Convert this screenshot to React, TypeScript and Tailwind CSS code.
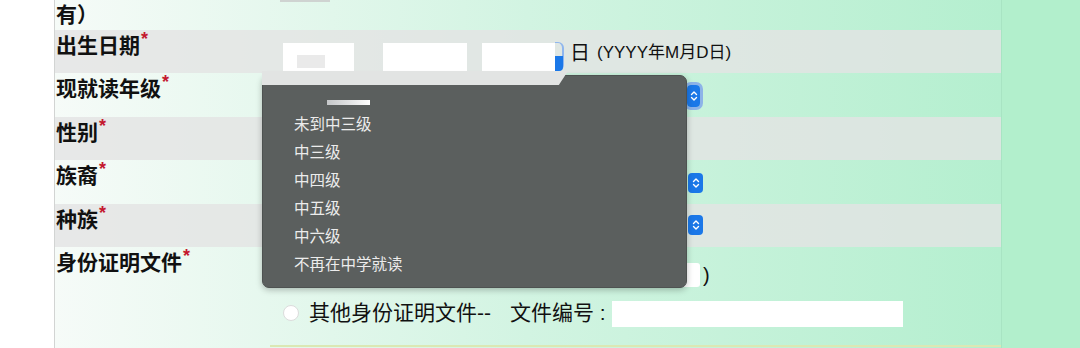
import React from "react";

const FONT = "font-['Liberation_Sans','Noto_Sans_CJK_SC',sans-serif]";

function Star() {
  return <span className="text-[#c4182f] text-[18px] font-bold relative -top-[8px] leading-none ml-[1px]">*</span>;
}

function Label({ text, star = true }: { text: string; star?: boolean }) {
  return (
    <div className="w-[228px] shrink-0 pl-[1px] pt-[2px] text-[21px] leading-[28px] font-bold text-[#111]">
      {text}
      {star && <Star />}
    </div>
  );
}

function BlueArrow({ w = 15, h = 20 }: { w?: number; h?: number }) {
  return (
    <div
      className="bg-[#1b78e8] rounded-[4px] flex items-center justify-center"
      style={{ width: w, height: h }}
    >
      <svg width="8" height="12" viewBox="0 0 8 12" fill="none">
        <path d="M1.5 4.5 L4 2 L6.5 4.5" stroke="white" strokeWidth="1.4" strokeLinecap="round" strokeLinejoin="round" />
        <path d="M1.5 7.5 L4 10 L6.5 7.5" stroke="white" strokeWidth="1.4" strokeLinecap="round" strokeLinejoin="round" />
      </svg>
    </div>
  );
}

export default function App() {
  const items = ["未到中三级", "中三级", "中四级", "中五级", "中六级", "不再在中学就读"];
  return (
    <div className={`w-[1080px] h-[348px] relative overflow-hidden bg-[#b2efcc] flex ${FONT}`}>
      <div className="w-[54px] shrink-0 bg-white" />
      <div className="w-[948px] shrink-0 h-full border-l border-[#d2d4d3] border-r border-r-[#a8e4c3] bg-linear-to-r from-[#f6fbf8] via-[#d2f4e2] to-[#b4efcf] flex flex-col relative">
        {/* top row */}
        <div className="h-[30px] flex relative">
          <div className="w-[228px] shrink-0 pl-[1px] pt-[1px] text-[21px] leading-[28px] font-bold text-[#111]">有）</div>
          <div className="absolute left-[225px] top-0 w-[50px] h-[2px] bg-[#cfd3d1]" />
        </div>
        {/* 出生日期 */}
        <div className="h-[43px] flex bg-[rgba(228,228,228,0.8)]">
          <Label text="出生日期" />
          <div className="flex items-start pt-[13px]">
            <div className="w-[71px] h-[28px] bg-white relative">
              <div className="absolute left-[14px] top-[12px] w-[28px] h-[13px] bg-[#eaeaea]" />
            </div>
            <div className="w-[29px]" />
            <div className="w-[84px] h-[28px] bg-white" />
            <div className="w-[15px]" />
            <div className="w-[73px] h-[28px] bg-white" />
            <div className="w-[9px] h-[29px] -mt-[1px] relative">
              <div className="absolute inset-0 rounded-r-[6px] border-r-[2px] border-t-[1px] border-[#8fb6ee]" />
              <div className="absolute left-0 bottom-0 w-[8px] h-[15px] bg-[#1b78e8] rounded-br-[4px]" />
            </div>
            <div className="ml-[6px] -mt-[4px] text-[20px] leading-[28px] text-[#111]">日</div>
            <div className="ml-[7px] -mt-[2px] text-[17px] leading-[24px] text-[#111]">(YYYY年M月D日)</div>
          </div>
        </div>
        {/* 现就读年级 */}
        <div className="h-[44px] flex">
          <Label text="现就读年级" />
          <div className="flex items-start pt-[9px] pl-[401px]">
            <div className="rounded-[7px] border-[3px] border-[#8db3e8] p-0">
              <BlueArrow w={13} h={22} />
            </div>
          </div>
        </div>
        {/* 性别 */}
        <div className="h-[43px] flex bg-[rgba(228,228,228,0.8)]">
          <Label text="性别" />
        </div>
        {/* 族裔 */}
        <div className="h-[44px] flex">
          <Label text="族裔" />
          <div className="pt-[13px] pl-[405px]">
            <BlueArrow />
          </div>
        </div>
        {/* 种族 */}
        <div className="h-[43px] flex bg-[rgba(228,228,228,0.8)]">
          <Label text="种族" />
          <div className="pt-[11px] pl-[405px]">
            <BlueArrow />
          </div>
        </div>
        {/* 身份证明文件 */}
        <div className="h-[48px] flex">
          <Label text="身份证明文件" />
          <div className="flex items-start pt-[16px] pl-[300px]">
            <div className="w-[117px] h-[24px] bg-white rounded-r-[3px]" />
            <div className="ml-[3px] -mt-[1px] text-[20px] leading-[26px] text-[#111]">)</div>
          </div>
        </div>
        {/* 其他 */}
        <div className="h-[50px] flex">
          <div className="w-[228px] shrink-0" />
          <div className="flex items-start pt-[4px]">
            <div className="mt-[6px] w-[16px] h-[16px] rounded-full bg-white border border-[#dcdcdc]" />
            <div className="ml-[10px] text-[21px] leading-[28px] text-[#111]">其他身份证明文件--</div>
            <div className="ml-[19px] text-[21px] leading-[28px] text-[#111]">文件编号 :</div>
            <div className="ml-[6px] mt-[2px] w-[291px] h-[26px] bg-white" />
          </div>
        </div>
        <div className="ml-[215px] h-[2px] bg-[#dbe8b4]" />
      </div>

      {/* dropdown menu */}
      <div className="absolute left-[262px] top-[75px] w-[425px] h-[213px] rounded-[7px] bg-[#5b5f5e] border border-[#4e5251] shadow-[0_2px_6px_rgba(0,0,0,0.25)]">
        <div className="absolute left-[64px] top-[24px] w-[43px] h-[5px] bg-linear-to-r from-[#c4c6c8] to-[#ffffff]" />
        <div className="absolute left-[31px] top-[33px] flex flex-col">
          {items.map((t) => (
            <div key={t} className="h-[28px] leading-[28px] text-[15.5px] text-[#ececec] font-['Noto_Sans_CJK_SC',sans-serif]">
              {t}
            </div>
          ))}
        </div>
      </div>
      {/* blurred strip over top of dropdown */}
      <div className="absolute left-[262px] top-[71px] w-[306px] h-[14px] bg-[#e2e4e3] [clip-path:polygon(0_0,100%_0,97%_100%,0_100%)]" />
    </div>
  );
}
